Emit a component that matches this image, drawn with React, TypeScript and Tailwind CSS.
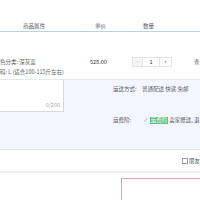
import React from "react";

const font = { fontFamily: '"Noto Sans CJK SC", "Noto Sans", sans-serif' };

export default function App() {
  return (
    <div
      className="w-[200px] h-[200px] overflow-hidden bg-white text-[5.5px] leading-[8px] text-[#5a5a5a]"
      style={font}
    >
      {/* header */}
      <div className="h-[20px]" />
      <div className="flex items-center h-[12px] border-b border-[#b9d0ea] pl-[23px]">
        <div className="w-[72px]">商品属性</div>
        <div className="w-[48px]">单价</div>
        <div>数量</div>
      </div>

      {/* item row */}
      <div className="flex items-start h-[47px] pt-[25px] whitespace-nowrap">
        <div className="w-[90px] shrink-0 leading-[10px]">
          <div>色分类: 深灰蓝</div>
          <div>码: L (适合100-115斤左右)</div>
        </div>
        <div className="w-[42px] shrink-0 leading-[10px] text-[#333]">528.00</div>
        <div className="flex h-[10px] shrink-0">
          <div className="w-[11px] flex items-center justify-center border border-[#e3e3e3] bg-[#f5f5f5] text-[#c4c4c4]">
            −
          </div>
          <div className="w-[16px] flex items-center justify-center border-y border-[#e3e3e3] text-[#333]">
            1
          </div>
          <div className="w-[13px] flex items-center justify-center border border-[#e3e3e3] text-[#555]">
            +
          </div>
        </div>
        <div className="ml-[22px] shrink-0 leading-[10px] text-[#555]">查</div>
      </div>

      {/* message + delivery */}
      <div className="flex h-[70px] bg-[#f2f7ff] border-t border-[#e4e9ef] whitespace-nowrap">
        <div className="w-[113px] shrink-0">
          <div className="w-[64px] h-[32px] bg-white border border-l-0 border-t-0 border-[#d9d9d9] flex items-end justify-end pr-[3px] pb-[2px] text-[#aaa]">
            0/200
          </div>
        </div>
        <div className="flex flex-col pt-[5px]">
          <div className="flex">
            <span className="w-[29px]">运送方式:</span>
            <span>普通配送 快递 免邮</span>
          </div>
          <div className="flex items-center mt-[23px]">
            <span className="w-[31px]">运费险:</span>
            <span className="text-[#999] mr-[2px]">✓</span>
            <span className="bg-[#5bbd7f] text-white px-[1px] leading-[7px]">运费险</span>
            <span className="ml-[1px]">卖家赠送, 退</span>
          </div>
        </div>
      </div>

      {/* bottom */}
      <div className="border-t border-[#e6ebf1] h-[22px] flex items-center whitespace-nowrap pl-[182px]">
        <span className="w-[6px] h-[6px] border border-[#999] bg-white mr-[1px] shrink-0" />
        <span className="text-[#555]">朋友</span>
      </div>
      <div className="h-[2px] bg-[#f0f0f0]" />
      <div className="pt-[5px] pl-[121px]">
        <div className="w-[120px] h-[40px] border border-[#dba2b0] bg-white" />
      </div>
    </div>
  );
}
